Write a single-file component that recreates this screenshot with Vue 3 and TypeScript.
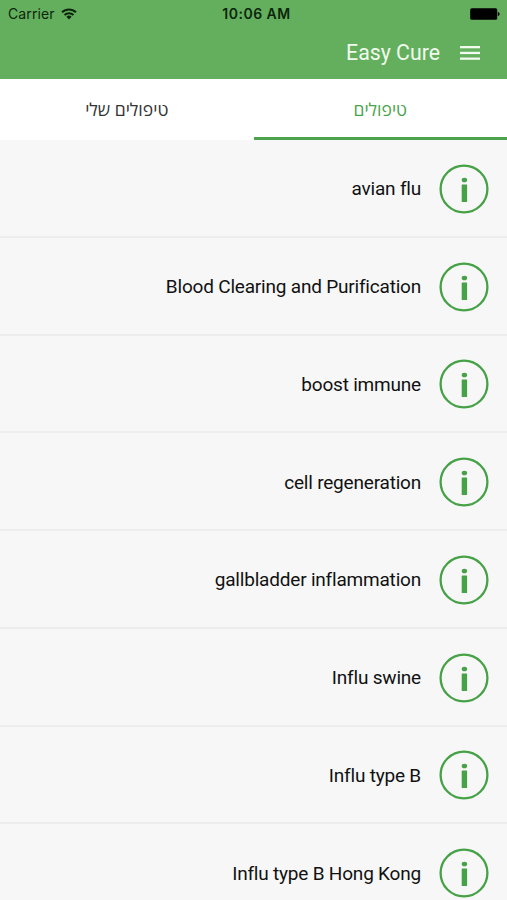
<script setup lang="ts">
import { ref } from 'vue'

interface Treatment {
  id: number
  name: string
}

const tabs: string[] = ['טיפולים', 'טיפולים שלי']
const activeTab = ref(0)

const treatments: Treatment[] = [
  'avian flu',
  'Blood Clearing and Purification',
  'boost immune',
  'cell regeneration',
  'gallbladder inflammation',
  'Influ swine',
  'Influ type B',
  'Influ type B Hong Kong',
].map((name, id) => ({ id, name }))
</script>

<template>
  <div class="screen">
    <header class="header">
      <div class="status">
        <div class="carrier">
          <span>Carrier</span>
          <svg class="wifi" width="16" height="12" viewBox="0 0 16 12" fill="none" stroke="#0c260c" stroke-width="2">
            <path d="M1 4.3a10 10 0 0 1 14 0" />
            <path d="M3.5 7a6.4 6.4 0 0 1 9 0" />
            <path d="M8 11.4 5.4 8.8a3.7 3.7 0 0 1 5.2 0z" fill="#0c260c" stroke="none" />
          </svg>
        </div>
        <span class="time">10:06 AM</span>
        <svg class="battery" width="30" height="12" viewBox="0 0 30 12">
          <rect x="0.2" y="0.2" width="27" height="11.6" rx="1.6" />
          <path d="M27.8 4c2.4.4 2.4 3.6 0 4z" />
        </svg>
      </div>
      <div class="toolbar">
        <h1 class="title">Easy Cure</h1>
        <button class="menu" type="button" aria-label="Menu">
          <svg width="20" height="14" viewBox="0 0 20 14" fill="#f1faee">
            <rect y="0" width="20" height="2.3" />
            <rect y="5.8" width="20" height="2.3" />
            <rect y="11.5" width="20" height="2.3" />
          </svg>
        </button>
      </div>
    </header>

    <nav class="tabs" dir="rtl">
      <button
        v-for="(tab, index) in tabs"
        :key="tab"
        type="button"
        class="tab"
        :class="{ active: activeTab === index }"
        @click="activeTab = index"
      >
        <span>{{ tab }}</span>
      </button>
    </nav>

    <ul class="list">
      <li v-for="item in treatments" :key="item.id" class="row">
        <span class="name">{{ item.name }}</span>
        <svg class="info" width="50" height="50" viewBox="0 0 50 50">
          <circle cx="25" cy="25" r="23.4" fill="none" stroke="#46a147" stroke-width="2.3" />
          <ellipse cx="25.4" cy="16" rx="2.7" ry="2.3" fill="#46a147" />
          <rect x="22.7" y="20.6" width="5.4" height="17.4" rx="0.5" fill="#46a147" />
        </svg>
      </li>
    </ul>
  </div>
</template>

<style>
body {
  margin: 0;
  overflow: hidden;
}
</style>

<style scoped>
.screen {
  width: 100%;
  height: 900px;
  overflow: hidden;
  background: #f7f7f7;
  font-family: Roboto, 'Open Sans', sans-serif;
}

.header {
  height: 79px;
  background: #64af5e;
}

.status {
  display: grid;
  grid-template-columns: 1fr auto 1fr;
  align-items: center;
  height: 27px;
  padding: 0 7px 0 8px;
  font-family: Inter, sans-serif;
  font-size: 14px;
  color: #0c260c;
}

.carrier {
  display: flex;
  align-items: center;
  gap: 6px;
  letter-spacing: 0.1px;
}

.time {
  padding-left: 5px;
  font-weight: 600;
  letter-spacing: 0.5px;
}

.battery {
  justify-self: end;
  fill: #000;
}

.toolbar {
  display: flex;
  align-items: center;
  justify-content: flex-end;
  gap: 20px;
  height: 51px;
  padding-right: 27px;
}

.title {
  margin: 0;
  font-size: 21.3px;
  font-weight: 400;
  color: #f1faee;
}

.menu {
  display: flex;
  padding: 0;
  border: 0;
  background: none;
}

.tabs {
  display: flex;
  height: 61px;
  background: #fff;
}

.tab {
  flex: 1;
  box-sizing: border-box;
  padding: 2px 0 0;
  border: 0;
  border-bottom: 3px solid transparent;
  background: none;
  font-family: 'Open Sans', sans-serif;
  font-size: 17.5px;
  font-weight: 500;
  color: #333;
}

.tab.active {
  border-bottom-color: #4ba44c;
  color: #4ba44c;
}

.list {
  margin: 0;
  padding: 0;
  list-style: none;
}

.row {
  display: flex;
  align-items: center;
  justify-content: flex-end;
  gap: 18px;
  box-sizing: border-box;
  height: 97.75px;
  padding: 2px 18px 0 0;
  border-bottom: 2px solid #ededed;
}

.name {
  font-size: 19px;
  letter-spacing: -0.2px;
  color: #111;
}

.info {
  flex: none;
}
</style>
